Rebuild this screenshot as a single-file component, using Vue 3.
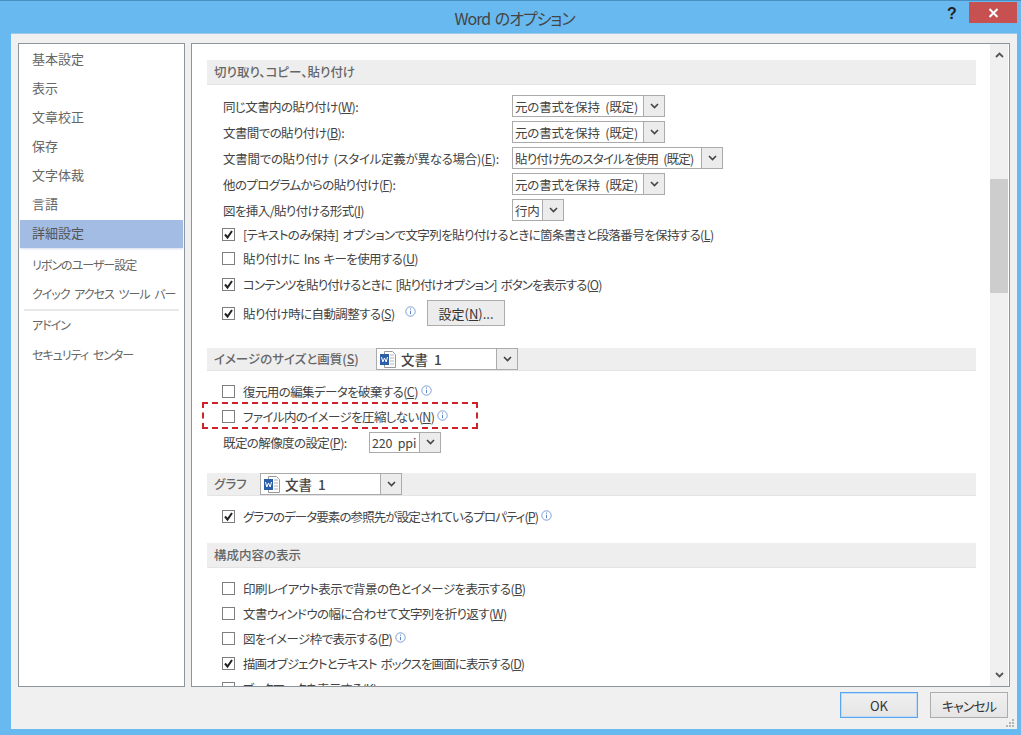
<script setup>
const navTop = ['基本設定', '表示', '文章校正', '保存', '文字体裁', '言語', '詳細設定']
const navMid = ['リボンのユーザー設定', 'クイック アクセス ツール バー']
const navEnd = ['アドイン', 'セキュリティ センター']

const pasteSelects = [
  { pre: '同じ文書内の貼り付け(', key: 'W', post: '):', value: '元の書式を保持 (既定)', width: 153 },
  { pre: '文書間での貼り付け(', key: 'B', post: '):', value: '元の書式を保持 (既定)', width: 153 },
  { pre: '文書間での貼り付け (スタイル定義が異なる場合)(', key: 'E', post: '):', value: '貼り付け先のスタイルを使用 (既定)', width: 211, long: true },
  { pre: '他のプログラムからの貼り付け(', key: 'F', post: '):', value: '元の書式を保持 (既定)', width: 153 },
  { pre: '図を挿入/貼り付ける形式(', key: 'I', post: ')', value: '行内', width: 52 },
]

const pasteChecks = [
  { pre: '[テキストのみ保持] オプションで文字列を貼り付けるときに箇条書きと段落番号を保持する(', key: 'L', checked: true },
  { pre: '貼り付けに Ins キーを使用する(', key: 'U', checked: false },
  { pre: 'コンテンツを貼り付けるときに [貼り付けオプション] ボタンを表示する(', key: 'O', checked: true, tight: true },
]

const displayChecks = [
  { pre: '印刷レイアウト表示で背景の色とイメージを表示する(', key: 'B', checked: false },
  { pre: '文書ウィンドウの幅に合わせて文字列を折り返す(', key: 'W', checked: false },
  { pre: '図をイメージ枠で表示する(', key: 'P', checked: false, info: true },
  { pre: '描画オブジェクトとテキスト ボックスを画面に表示する(', key: 'D', checked: true, tight: true },
  { pre: 'ブックマークを表示する(', key: 'K', checked: false },
]
</script>

<template>
  <div class="win">
    <header class="titlebar">
      <span class="title">Word のオプション</span>
      <span class="help">?</span>
      <span class="close">
        <svg width="11" height="10" viewBox="0 0 11 10"><path d="M1.5 1 9.5 9M9.5 1 1.5 9" stroke="#fff" stroke-width="2" fill="none" /></svg>
      </span>
    </header>

    <div class="client">
      <div class="panes">
        <nav class="nav">
          <div v-for="n in navTop" :key="n" class="nav-item" :class="{ 'nav-item--on': n === '詳細設定' }">{{ n }}</div>
          <div class="nav-gap"></div>
          <div v-for="n in navMid" :key="n" class="nav-item nav-item--kana">{{ n }}</div>
          <div class="nav-sep"></div>
          <div v-for="n in navEnd" :key="n" class="nav-item nav-item--kana nav-item--end">{{ n }}</div>
        </nav>

        <main class="panel">
          <div class="scroll">
            <div class="sec sec--first">切り取り、コピー、貼り付け</div>
            <div class="rows-sel">
              <div v-for="r in pasteSelects" :key="r.key" class="row">
                <span class="lbl lbl--fix" :class="{ 'lbl--loose': r.long }">{{ r.pre }}<u>{{ r.key }}</u>{{ r.post }}</span>
                <span class="sel" :style="{ width: r.width + 'px' }">
                  <span class="sel-val" :class="{ 'sel-val--long': r.long }">{{ r.value }}</span>
                  <span class="sel-btn"><svg width="9" height="6" viewBox="0 0 9 6"><path d="M1 1 4.5 4.5 8 1" stroke="#444" stroke-width="1.6" fill="none" /></svg></span>
                </span>
              </div>
            </div>
            <div class="rows-chk">
              <div v-for="c in pasteChecks" :key="c.key" class="chk-row">
                <span class="box"><svg v-if="c.checked" width="11" height="11" viewBox="0 0 11 11"><path d="M2 5.5 4.5 8.5 9 2" stroke="#222" stroke-width="2" fill="none" /></svg></span>
                <span class="lbl" :class="{ 'lbl--tight': c.tight }">{{ c.pre }}<u>{{ c.key }}</u>)</span>
              </div>
              <div class="chk-row chk-row--btn">
                <span class="box"><svg width="11" height="11" viewBox="0 0 11 11"><path d="M2 5.5 4.5 8.5 9 2" stroke="#222" stroke-width="2" fill="none" /></svg></span>
                <span class="lbl">貼り付け時に自動調整する(<u>S</u>)</span>
                <svg class="info" width="11" height="11" viewBox="0 0 11 11"><circle cx="5.5" cy="5.5" r="4.7" fill="none" stroke="#7c9fd6" /><path d="M5.5 2.5v1.2M5.5 4.8v3.4" stroke="#5f86c6" /></svg>
                <button class="btn-set">設定(<u>N</u>)...</button>
              </div>
            </div>

            <div class="sec sec--sel sec--img">
              <span class="sec-lbl">イメージのサイズと画質(<u>S</u>)</span>
              <span class="sel sel--doc">
                <span class="sel-val">
                  <svg class="doc" width="18" height="17" viewBox="0 0 18 17"><path d="M5.5.5h8l3 3v13h-11z" fill="#fff" stroke="#9a9a9a" /><path d="M11 4h4M11 7h4M11 10h4M11 13h4" stroke="#b5b5b5" /><rect x="1" y="3" width="9" height="11" fill="#2b5fa8" /><path d="M2.5 6 3.8 11 5.5 7 7.2 11 8.5 6" stroke="#fff" fill="none" /></svg>
                  文書 1
                </span>
                <span class="sel-btn"><svg width="9" height="6" viewBox="0 0 9 6"><path d="M1 1 4.5 4.5 8 1" stroke="#444" stroke-width="1.6" fill="none" /></svg></span>
              </span>
            </div>
            <div class="rows-img">
              <div class="chk-row">
                <span class="box"></span>
                <span class="lbl">復元用の編集データを破棄する(<u>C</u>)</span>
                <svg class="info" width="11" height="11" viewBox="0 0 11 11"><circle cx="5.5" cy="5.5" r="4.7" fill="none" stroke="#7c9fd6" /><path d="M5.5 2.5v1.2M5.5 4.8v3.4" stroke="#5f86c6" /></svg>
              </div>
              <div class="chk-row">
                <span class="box"></span>
                <span class="lbl">ファイル内のイメージを圧縮しない(<u>N</u>)</span>
                <svg class="info" width="11" height="11" viewBox="0 0 11 11"><circle cx="5.5" cy="5.5" r="4.7" fill="none" stroke="#7c9fd6" /><path d="M5.5 2.5v1.2M5.5 4.8v3.4" stroke="#5f86c6" /></svg>
                <span class="mark"></span>
              </div>
              <div class="row row--ppi">
                <span class="lbl">既定の解像度の設定(<u>P</u>):</span>
                <span class="sel sel--ppi">
                  <span class="sel-val">220 ppi</span>
                  <span class="sel-btn"><svg width="9" height="6" viewBox="0 0 9 6"><path d="M1 1 4.5 4.5 8 1" stroke="#444" stroke-width="1.6" fill="none" /></svg></span>
                </span>
              </div>
            </div>

            <div class="sec sec--sel sec--graph">
              <span class="sec-lbl">グラフ</span>
              <span class="sel sel--doc">
                <span class="sel-val">
                  <svg class="doc" width="18" height="17" viewBox="0 0 18 17"><path d="M5.5.5h8l3 3v13h-11z" fill="#fff" stroke="#9a9a9a" /><path d="M11 4h4M11 7h4M11 10h4M11 13h4" stroke="#b5b5b5" /><rect x="1" y="3" width="9" height="11" fill="#2b5fa8" /><path d="M2.5 6 3.8 11 5.5 7 7.2 11 8.5 6" stroke="#fff" fill="none" /></svg>
                  文書 1
                </span>
                <span class="sel-btn"><svg width="9" height="6" viewBox="0 0 9 6"><path d="M1 1 4.5 4.5 8 1" stroke="#444" stroke-width="1.6" fill="none" /></svg></span>
              </span>
            </div>
            <div class="rows-graph">
              <div class="chk-row">
                <span class="box"><svg width="11" height="11" viewBox="0 0 11 11"><path d="M2 5.5 4.5 8.5 9 2" stroke="#222" stroke-width="2" fill="none" /></svg></span>
                <span class="lbl lbl--tight">グラフのデータ要素の参照先が設定されているプロパティ(<u>P</u>)</span>
                <svg class="info" width="11" height="11" viewBox="0 0 11 11"><circle cx="5.5" cy="5.5" r="4.7" fill="none" stroke="#7c9fd6" /><path d="M5.5 2.5v1.2M5.5 4.8v3.4" stroke="#5f86c6" /></svg>
              </div>
            </div>

            <div class="sec sec--disp">構成内容の表示</div>
            <div class="rows-disp">
              <div v-for="c in displayChecks" :key="c.pre" class="chk-row">
                <span class="box"><svg v-if="c.checked" width="11" height="11" viewBox="0 0 11 11"><path d="M2 5.5 4.5 8.5 9 2" stroke="#222" stroke-width="2" fill="none" /></svg></span>
                <span class="lbl" :class="{ 'lbl--tight': c.tight }">{{ c.pre }}<u>{{ c.key }}</u>)</span>
                <svg v-if="c.info" class="info" width="11" height="11" viewBox="0 0 11 11"><circle cx="5.5" cy="5.5" r="4.7" fill="none" stroke="#7c9fd6" /><path d="M5.5 2.5v1.2M5.5 4.8v3.4" stroke="#5f86c6" /></svg>
              </div>
            </div>
          </div>

          <div class="sbar">
            <svg class="sbar-arrow" width="9" height="6" viewBox="0 0 9 6"><path d="M1 5 4.5 1.5 8 5" stroke="#555" stroke-width="1.8" fill="none" /></svg>
            <div class="sbar-thumb"></div>
            <svg class="sbar-arrow sbar-arrow--down" width="9" height="6" viewBox="0 0 9 6"><path d="M1 1 4.5 4.5 8 1" stroke="#555" stroke-width="1.8" fill="none" /></svg>
          </div>
        </main>
      </div>

      <footer class="foot">
        <button class="fbtn fbtn--ok">OK</button>
        <button class="fbtn fbtn--cancel">キャンセル</button>
        <svg class="grip" width="9" height="9" viewBox="0 0 9 9" fill="#b5b5b5"><rect x="6" y="0" width="2" height="2" /><rect x="3" y="3" width="2" height="2" /><rect x="6" y="3" width="2" height="2" /><rect x="0" y="6" width="2" height="2" /><rect x="3" y="6" width="2" height="2" /><rect x="6" y="6" width="2" height="2" /></svg>
      </footer>
    </div>
  </div>
</template>

<style>
html, body { margin: 0; overflow: hidden; }
</style>

<style scoped>
.win {
  width: 1021px;
  height: 735px;
  box-sizing: border-box;
  background: #67b9ef;
  border-top: 1px solid #4a8fc2;
  display: flex;
  flex-direction: column;
  font-family: "Noto Sans CJK JP", "Liberation Sans", sans-serif;
  font-size: 13px;
  font-feature-settings: "palt";
  color: #444;
  overflow: hidden;
}

.titlebar {
  height: 32px;
  flex-shrink: 0;
  position: relative;
  display: flex;
  align-items: flex-start;
  justify-content: center;
}

.title {
  font-size: 16px;
  letter-spacing: -1px;
  word-spacing: 2px;
  line-height: 35px;
  color: #444;
  margin-left: 8px;
}

.help {
  position: absolute;
  left: 947px;
  top: 1px;
  font: bold 16px/24px "Liberation Sans", sans-serif;
  color: #222;
}

.close {
  position: absolute;
  left: 969px;
  top: 1px;
  width: 48px;
  height: 21px;
  background: #c75050;
  display: flex;
  align-items: center;
  justify-content: center;
}

.client {
  flex: 1;
  min-height: 0;
  margin: 0 4px 6px 11px;
  background: #f0f0f0;
  border-top: 1px solid #9ccbe9;
  padding: 9px 7px 0;
  display: flex;
  flex-direction: column;
}

.panes {
  flex: none;
  height: 644px;
  display: flex;
  gap: 6px;
}

.nav {
  width: 167px;
  box-sizing: border-box;
  background: #fff;
  border: 1px solid #8c949c;
  padding: 2px 1px;
  flex-shrink: 0;
}

.nav-item {
  height: 29px;
  line-height: 26px;
  padding-left: 12px;
  font-size: 13px;
  color: #666;
  white-space: nowrap;
}

.nav-item--kana {
  font-size: 12px;
  letter-spacing: -1px;
  word-spacing: 3px;
  line-height: 27px;
}

.nav-item--on {
  height: 28px;
  background: #a2bce4;
  color: #555;
  box-shadow: 0 1px 2px #d4deee;
}

.nav-item--end { height: 30px; }

.nav-gap { height: 3px; }

.nav-sep {
  height: 2px;
  margin: 0 4px;
  background: #e8e8e8;
}

.panel {
  flex: 1;
  min-width: 0;
  background: #fff;
  border: 1px solid #8c949c;
  display: flex;
  overflow: hidden;
}

.scroll {
  flex: 1;
  min-width: 0;
  overflow: hidden;
  padding-right: 14px;
}

.sec {
  margin-left: 15px;
  height: 25px;
  box-sizing: border-box;
  background: #eee;
  border-bottom: 1px solid #e4e4e4;
  padding-left: 7px;
  line-height: 24px;
  font-size: 12.5px;
  font-weight: 500;
  color: #666;
  white-space: nowrap;
}

.sec--first { margin-top: 16px; }
.sec--sel { display: flex; align-items: center; }
.sec--img { margin-top: 20px; height: 23px; }
.sec--graph { margin-top: 18px; height: 23px; }
.sec--disp { margin-top: 14px; }

.sec-lbl { flex-shrink: 0; }
.sec--img .sec-lbl { width: 162px; }
.sec--graph .sec-lbl { width: 46px; }

.rows-sel { margin-top: 8px; }
.rows-chk { margin-top: -1px; }
.rows-img { margin-top: 8px; }
.rows-graph { margin-top: 8px; }
.rows-disp { margin-top: 8px; }

.row {
  height: 26px;
  padding-left: 31px;
  display: flex;
  align-items: center;
  white-space: nowrap;
}

.lbl {
  font-size: 12.5px;
  letter-spacing: -0.6px;
  word-spacing: 2px;
  color: #444;
  white-space: nowrap;
}

.lbl--fix { width: 289px; flex-shrink: 0; }
.lbl--loose { letter-spacing: -0.3px; }
.lbl--tight { letter-spacing: -0.9px; }

.row--ppi .lbl { width: 146px; flex-shrink: 0; }

.sel {
  height: 22px;
  box-sizing: border-box;
  background: #fff;
  border: 1px solid #ababab;
  display: inline-flex;
  align-items: stretch;
  flex-shrink: 0;
}

.sel-val {
  flex: 1;
  min-width: 0;
  padding-left: 2px;
  font-size: 12.5px;
  letter-spacing: -0.2px;
  word-spacing: 3px;
  line-height: 19px;
  white-space: nowrap;
  overflow: hidden;
  display: flex;
  align-items: center;
  gap: 4px;
  color: #444;
}

.sel-val--long { letter-spacing: -0.8px; }

.sel-btn {
  width: 20px;
  flex-shrink: 0;
  background: #ececec;
  border-left: 1px solid #ababab;
  display: flex;
  align-items: center;
  justify-content: center;
}

.sel--doc { width: 142px; }
.sel--doc .sel-val { font-weight: 500; font-size: 13.5px; letter-spacing: 0; }
.sel--ppi { width: 72px; height: 21px; }
.doc { flex-shrink: 0; }

.chk-row {
  height: 25px;
  padding-left: 30px;
  display: flex;
  align-items: center;
  position: relative;
  white-space: nowrap;
}

.rows-chk .chk-row { height: 24px; }
.rows-chk .chk-row:nth-child(3) { height: 28px; }
.rows-chk .chk-row--btn { height: 30px; }
.chk-row--btn .lbl { width: 159px; flex-shrink: 0; }

.box {
  width: 13px;
  height: 13px;
  box-sizing: border-box;
  border: 1px solid #7f7f7f;
  background: #fff;
  margin-right: 8px;
  display: flex;
  align-items: center;
  justify-content: center;
  flex-shrink: 0;
}

.info { margin-left: 3px; margin-bottom: 3px; flex-shrink: 0; }

.btn-set {
  margin-left: 11px;
  width: 78px;
  height: 26px;
  border: 1px solid #acacac;
  background: #ececec;
  font: inherit;
  font-feature-settings: "palt";
  color: #333;
  padding: 0;
}

.mark {
  position: absolute;
  left: 10px;
  top: -2px;
  width: 276px;
  height: 27px;
  box-sizing: border-box;
  border: 2px dashed #d0202a;
}

.sbar {
  width: 18px;
  margin: 0 1px 0 0;
  background: #f0f0f0;
  flex-shrink: 0;
  display: flex;
  flex-direction: column;
  align-items: center;
  padding: 8px 0 8px;
  box-sizing: border-box;
}

.sbar-thumb {
  width: 100%;
  height: 114px;
  margin-top: 121px;
  background: #cdcdcd;
}

.sbar-arrow--down { margin-top: auto; }

.foot {
  flex: 1;
  position: relative;
  display: flex;
  justify-content: flex-end;
  align-items: flex-start;
  gap: 12px;
  padding: 5px 2px 0 0;
}

.fbtn {
  width: 78px;
  height: 26px;
  box-sizing: border-box;
  border: 1px solid #acacac;
  background: linear-gradient(#f0f0f0, #e5e5e5);
  font: inherit;
  font-feature-settings: "palt";
  color: #333;
  padding: 0;
}

.fbtn--cancel { letter-spacing: -1px; }

.fbtn--ok {
  border-color: #5aa5ec;
  box-shadow: inset 0 0 0 1px #bcdcf7;
}

.grip {
  position: absolute;
  right: -5px;
  bottom: 1px;
}
</style>
